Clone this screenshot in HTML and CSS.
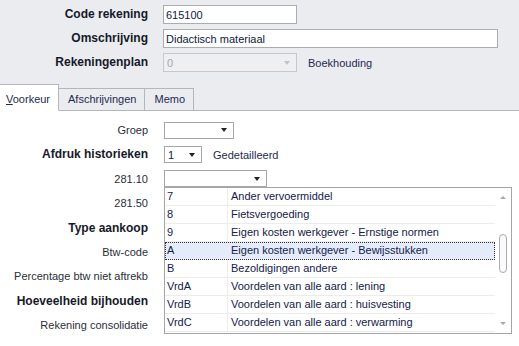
FILE: index.html
```html
<!DOCTYPE html>
<html lang="nl">
<head>
    <meta charset="UTF-8">
    <title>Rekening</title>
    <link rel="stylesheet" href="styles.css">
</head>
<body>
    <div class="window">

        <div class="header">
            <div class="fields">
                <label class="lbl">Code rekening</label>
                <div class="ctl"><input class="txt short" value="615100"></div>

                <label class="lbl">Omschrijving</label>
                <div class="ctl"><input class="txt long" value="Didactisch materiaal"></div>

                <label class="lbl">Rekeningenplan</label>
                <div class="ctl">
                    <div class="combo disabled short"><span>0</span><i class="arrow"></i></div>
                    <span class="note">Boekhouding</span>
                </div>
            </div>

            <div class="tabs">
                <div class="tab active"><u>V</u>oorkeur</div>
                <div class="tab">Afschrijvingen</div>
                <div class="tab">Memo</div>
            </div>
        </div>

        <div class="page">
            <div class="form">
                <div class="name">Groep</div>
                <div class="ctl"><div class="combo w-groep"><span></span><i class="arrow"></i></div></div>

                <div class="name bold">Afdruk historieken</div>
                <div class="ctl">
                    <div class="combo w-afdruk"><span>1</span><i class="arrow"></i></div>
                    <span class="note">Gedetailleerd</span>
                </div>

                <div class="name">281.10</div>
                <div class="ctl"><div class="combo w-code"><span></span><i class="arrow"></i></div></div>

                <div class="name">281.50</div>
                <div class="ctl"></div>

                <div class="name bold">Type aankoop</div>
                <div class="ctl"></div>

                <div class="name">Btw-code</div>
                <div class="ctl"></div>

                <div class="name">Percentage btw niet aftrekb</div>
                <div class="ctl"></div>

                <div class="name bold">Hoeveelheid bijhouden</div>
                <div class="ctl"></div>

                <div class="name">Rekening consolidatie</div>
                <div class="ctl"></div>
            </div>

            <!-- open dropdown van 281.10 -->
            <div class="popup">
                <div class="rows">
                    <div class="row"><span class="c1">7</span><span class="c2">Ander vervoermiddel</span></div>
                    <div class="row"><span class="c1">8</span><span class="c2">Fietsvergoeding</span></div>
                    <div class="row"><span class="c1">9</span><span class="c2">Eigen kosten werkgever - Ernstige normen</span></div>
                    <div class="row sel"><span class="c1">A</span><span class="c2">Eigen kosten werkgever - Bewijsstukken</span></div>
                    <div class="row"><span class="c1">B</span><span class="c2">Bezoldigingen andere</span></div>
                    <div class="row"><span class="c1">VrdA</span><span class="c2">Voordelen van alle aard : lening</span></div>
                    <div class="row"><span class="c1">VrdB</span><span class="c2">Voordelen van alle aard : huisvesting</span></div>
                    <div class="row"><span class="c1">VrdC</span><span class="c2">Voordelen van alle aard : verwarming</span></div>
                </div>
                <div class="scroll">
                    <i class="up"></i>
                    <div class="track"><div class="thumb"></div></div>
                    <i class="down"></i>
                </div>
            </div>
        </div>

    </div>
</body>
</html>
```

FILE: styles.css
```css
*{
    margin: 0px;
    padding: 0px;
    box-sizing: border-box;
}

body{
    background-color: white;
    font-family: "Liberation Sans", Arial, sans-serif;
    font-size: 11px;
    color: #1f2a48;
}

.window{
    width: 519px;
    height: 346px;
    overflow: hidden;
}

/* bovenste deel */
.header{
    background-color: #ebecf0;
    padding-top: 5px;
    border-bottom: 1px solid #b4b6ba;
    height: 111px;
    display: flex;
    flex-direction: column;
}

.fields{
    display: grid;
    grid-template-columns: 148px auto;
    column-gap: 15px;
    row-gap: 5px;
    grid-auto-rows: 19px;
}

.lbl{
    text-align: right;
    font-weight: bold;
    font-size: 12px;
    line-height: 19px;
    color: #15192a;
}

.ctl{
    display: flex;
    align-items: center;
}

.txt{
    height: 19px;
    border: 1px solid #aaacb0;
    background-color: white;
    font-family: inherit;
    font-size: 11px;
    color: #101a3c;
    padding-left: 2px;
    outline: none;
}

.short{
    width: 134px;
}

.long{
    width: 335px;
}

.combo{
    height: 17px;
    border: 1px solid #a5a7ab;
    background-color: white;
    display: flex;
    align-items: center;
    justify-content: space-between;
    padding: 0px 6px 0px 3px;
    color: #101a3c;
}

.combo.disabled{
    height: 19px;
    background-color: #efeff1;
    border-color: #c6c8cc;
    color: #a3a6ad;
}

.arrow{
    width: 0px;
    height: 0px;
    border-left: 3.5px solid transparent;
    border-right: 3.5px solid transparent;
    border-top: 4px solid #222;
}

.disabled .arrow{
    border-top-color: #c2c4c8;
}

.note{
    margin-left: 11px;
    color: #1f2a50;
}

.w-groep{
    width: 70px;
}

.w-afdruk{
    width: 38px;
}

.w-code{
    width: 103px;
}

/* tabs */
.tabs{
    margin-top: auto;
    display: flex;
    align-items: flex-end;
    margin-bottom: -1px;
}

.tab{
    height: 23px;
    padding: 0px 8px 0px 9px;
    line-height: 21px;
    border-top: 1px solid #b4b6ba;
    border-right: 1px solid #b4b6ba;
    border-bottom: 1px solid #b4b6ba;
    background-color: #ebecf0;
    color: #1f2a50;
}

.tab.active{
    height: 27px;
    width: 59px;
    padding: 0px 0px 0px 6px;
    line-height: 29px;
    background-color: white;
    border-bottom-color: white;
}

/* onderste deel */
.page{
    position: relative;
    padding-top: 7px;
}

.form{
    display: grid;
    grid-template-columns: 148px auto;
    column-gap: 16px;
    grid-auto-rows: 24.4px;
}

.name{
    text-align: right;
    line-height: 24.4px;
    color: #2a2e3a;
    white-space: nowrap;
}

.name.bold{
    font-weight: bold;
    font-size: 12px;
    color: #15192a;
}

.popup{
    position: absolute;
    left: 164px;
    top: 76px;
    width: 348px;
    height: 147px;
    border: 1px solid #a3a5a9;
    background-color: white;
    display: flex;
}

.rows{
    flex: 1;
}

.row{
    height: 18px;
    display: flex;
    align-items: center;
    border-bottom: 1px solid #ececec;
    color: #14204a;
}

.row .c1{
    width: 63px;
    padding-left: 2px;
    height: 100%;
    line-height: 17px;
    border-right: 1px solid #ececec;
}

.row .c2{
    padding-left: 3px;
    line-height: 17px;
}

.row.sel{
    background-color: #e4ecfb;
    outline: 1px dotted #333;
    outline-offset: -1px;
}

.scroll{
    width: 16px;
    display: flex;
    flex-direction: column;
    align-items: center;
    padding: 8px 0px 8px 0px;
}

.up, .down{
    width: 0px;
    height: 0px;
    border-left: 3px solid transparent;
    border-right: 3px solid transparent;
}

.up{
    border-bottom: 3px solid #a8a8a8;
}

.down{
    border-top: 3px solid #a8a8a8;
}

.track{
    flex: 1;
    width: 100%;
    padding-top: 35px;
    display: flex;
    justify-content: center;
}

.thumb{
    width: 8px;
    height: 39px;
    border: 1px solid #a8aaae;
    border-radius: 4px;
    background-color: #fafafa;
}
```
